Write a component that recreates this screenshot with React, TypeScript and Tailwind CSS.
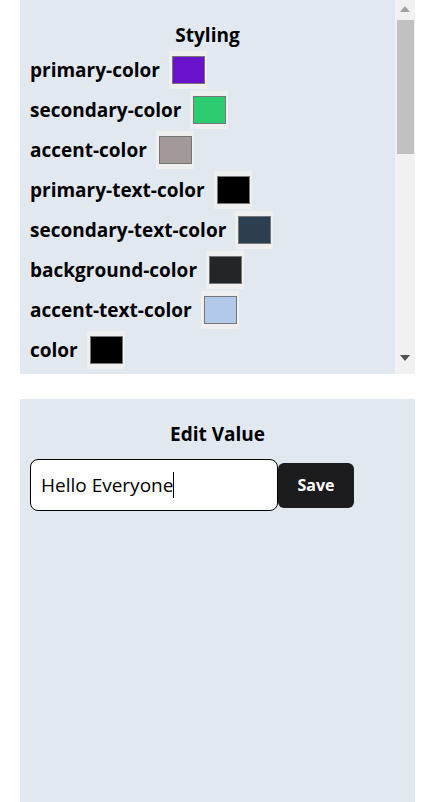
const font = { fontFamily: '"Open Sans", "Noto Sans", sans-serif' };

const colors: { name: string; value: string }[] = [
  { name: 'primary-color', value: '#6a11cb' },
  { name: 'secondary-color', value: '#2ecc71' },
  { name: 'accent-color', value: '#a39999' },
  { name: 'primary-text-color', value: '#000000' },
  { name: 'secondary-text-color', value: '#2c3e50' },
  { name: 'background-color', value: '#222628' },
  { name: 'accent-text-color', value: '#b3c9ea' },
  { name: 'color', value: '#000000' },
];

function Swatch({ value }: { value: string }) {
  return (
    <div className="w-[38px] h-[38px] bg-[#efefef] pl-[3px] pr-[2px] py-[5px] shrink-0">
      <div className="w-full h-full border border-[#767676]" style={{ backgroundColor: value }} />
    </div>
  );
}

// fake classic scrollbar, headless chrome hides the native one
function Scrollbar() {
  return (
    <div className="w-[20px] h-full bg-[#f1f1f1] flex flex-col items-center shrink-0">
      <div className="h-[17px] flex items-center justify-center">
        <div className="w-0 h-0 border-l-[5px] border-r-[5px] border-b-[6px] border-l-transparent border-r-transparent border-b-[#a3a3a3]" />
      </div>
      <div className="w-[17px] h-[134px] bg-[#c1c1c1] ml-[1px] mt-[3px]" />
      <div className="flex-1" />
      <div className="h-[22px] flex items-start justify-center pt-[3px]">
        <div className="w-0 h-0 border-l-[5px] border-r-[5px] border-t-[6px] border-l-transparent border-r-transparent border-t-[#505050]" />
      </div>
    </div>
  );
}

export default function App() {
  return (
    <div className="bg-white min-h-[802px] text-black" style={font}>
      <div className="ml-[20px] w-[395px] h-[374px] bg-slate-200 flex">
        <div className="flex-1 h-full overflow-hidden px-[10px] pt-[20px]">
          <h3 className="text-[19px] font-bold text-center leading-[30px]">Styling</h3>
          {colors.map((c) => (
            <div key={c.name} className="flex items-center gap-[9px] h-[40px]">
              <span className="text-[19px] font-bold">{c.name}</span>
              <Swatch value={c.value} />
            </div>
          ))}
        </div>
        <Scrollbar />
      </div>

      <div className="ml-[20px] mt-[25px] w-[395px] h-[420px] bg-slate-200 px-[10px] pt-[20px]">
        <h3 className="text-[19px] font-bold text-center leading-[30px] mb-[10px]">Edit Value</h3>
        <div className="flex items-center">
          <div className="w-[248px] h-[52px] bg-white border border-black rounded-lg px-[10px] flex items-center">
            <span className="text-[19px]">Hello Everyone</span>
            <span className="w-px h-[26px] bg-black" />
          </div>
          <button className="w-[76px] h-[45px] bg-[#1c1c1e] text-white font-bold rounded-md">Save</button>
        </div>
      </div>
    </div>
  );
}
